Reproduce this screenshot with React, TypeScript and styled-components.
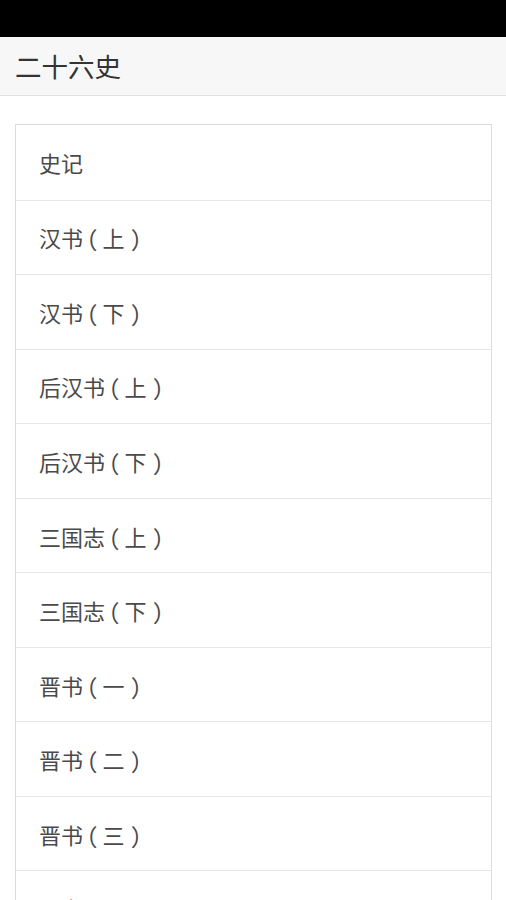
import React from "react";
import styled, { createGlobalStyle } from "styled-components";

const GlobalStyle = createGlobalStyle`
  html, body {
    margin: 0;
    padding: 0;
    background: #ffffff;
    font-family: "Noto Sans CJK SC", "Noto Sans", sans-serif;
  }
`;

const Page = styled.div`
  display: flex;
  flex-direction: column;
  width: 506px;
  height: 900px;
  overflow: hidden;
  background: #ffffff;
`;

const StatusBar = styled.div`
  height: 37px;
  background: #000000;
  flex-shrink: 0;
`;

const Header = styled.header`
  height: 58px;
  background: #f7f7f7;
  border-bottom: 1px solid #e2e2e2;
  display: flex;
  align-items: center;
  padding-left: 15px;
  flex-shrink: 0;
  box-sizing: content-box;
`;

const Title = styled.h1`
  margin: 0;
  font-size: 26.5px;
  font-weight: 400;
  color: #333333;
  line-height: 1;
`;

const Content = styled.main`
  padding: 28px 14px 0 15px;
`;

const Card = styled.ul`
  list-style: none;
  margin: 0;
  padding: 0;
  border: 1px solid #dcdcdc;
  background: #ffffff;
`;

const Row = styled.li<{ $first?: boolean }>`
  height: 74.56px;
  box-sizing: border-box;
  border-top: ${(p) => (p.$first ? "none" : "1px solid #e6e6e6")};
  display: flex;
  align-items: center;
  padding-left: 23px;
  font-size: 22px;
  color: #4a4a4a;
  flex-shrink: 0;
  white-space: pre;
`;

const Bracket = styled.span<{ $open?: boolean }>`
  display: inline-block;
  width: 1em;
  text-align: center;
  font-feature-settings: "hwid";
  padding-right: ${(p) => (p.$open ? "0.12em" : "0")};
  margin-right: ${(p) => (p.$open ? "-0.12em" : "0")};
  box-sizing: border-box;
`;

const books = [
  "史记",
  "汉书（上）",
  "汉书（下）",
  "后汉书（上）",
  "后汉书（下）",
  "三国志（上）",
  "三国志（下）",
  "晋书（一）",
  "晋书（二）",
  "晋书（三）",
  "晋书（四）",
];

function renderTitle(t: string) {
  return t.split(/([（）])/).map((part, i) =>
    part === "（" || part === "）" ? (
      <Bracket key={i} $open={part === "（"}>
        {part}
      </Bracket>
    ) : (
      <React.Fragment key={i}>{part}</React.Fragment>
    )
  );
}

export default function App() {
  return (
    <>
      <GlobalStyle />
      <Page>
        <StatusBar />
        <Header>
          <Title>二十六史</Title>
        </Header>
        <Content>
          <Card>
            {books.map((b, i) => (
              <Row key={b} $first={i === 0}>
                {renderTitle(b)}
              </Row>
            ))}
          </Card>
        </Content>
      </Page>
    </>
  );
}
